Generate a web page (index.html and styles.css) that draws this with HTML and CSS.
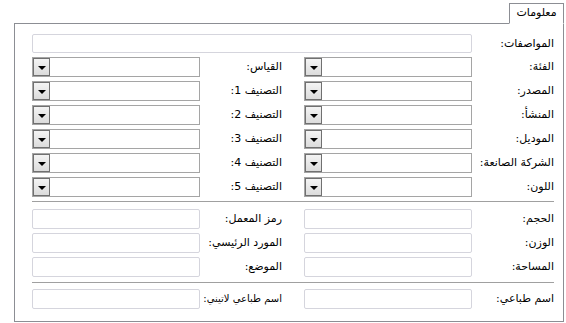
FILE: index.html
```html
<!DOCTYPE html>
<html lang="ar" dir="rtl">
<head>
    <meta charset="UTF-8">
    <meta name="viewport" content="width=device-width, initial-scale=1.0">
    <title>معلومات</title>
    <link rel="stylesheet" href="styles.css">
</head>
<body>
    <div class="wrapper">
        <div class="tabs">
            <div class="tab">معلومات</div>
        </div>
        <div class="panel">
            <div class="grid">
                <label class="lbl">المواصفات:</label>
                <div class="field wide"></div>

                <label class="lbl">الفئة:</label>
                <div class="combo"><span class="combo-btn"></span></div>
                <span></span>
                <label class="lbl">القياس:</label>
                <div class="combo"><span class="combo-btn"></span></div>

                <label class="lbl">المصدر:</label>
                <div class="combo"><span class="combo-btn"></span></div>
                <span></span>
                <label class="lbl">التصنيف 1:</label>
                <div class="combo"><span class="combo-btn"></span></div>

                <label class="lbl">المنشأ:</label>
                <div class="combo"><span class="combo-btn"></span></div>
                <span></span>
                <label class="lbl">التصنيف 2:</label>
                <div class="combo"><span class="combo-btn"></span></div>

                <label class="lbl">الموديل:</label>
                <div class="combo"><span class="combo-btn"></span></div>
                <span></span>
                <label class="lbl">التصنيف 3:</label>
                <div class="combo"><span class="combo-btn"></span></div>

                <label class="lbl">الشركة الصانعة:</label>
                <div class="combo"><span class="combo-btn"></span></div>
                <span></span>
                <label class="lbl">التصنيف 4:</label>
                <div class="combo"><span class="combo-btn"></span></div>

                <label class="lbl">اللون:</label>
                <div class="combo"><span class="combo-btn"></span></div>
                <span></span>
                <label class="lbl">التصنيف 5:</label>
                <div class="combo"><span class="combo-btn"></span></div>
            </div>

            <div class="sep sep-1"></div>

            <div class="grid">
                <label class="lbl">الحجم:</label>
                <div class="field"></div>
                <span></span>
                <label class="lbl">رمز المعمل:</label>
                <div class="field"></div>

                <label class="lbl">الوزن:</label>
                <div class="field"></div>
                <span></span>
                <label class="lbl">المورد الرئيسي:</label>
                <div class="field"></div>

                <label class="lbl">المساحة:</label>
                <div class="field"></div>
                <span></span>
                <label class="lbl">الموضع:</label>
                <div class="field"></div>
            </div>

            <div class="sep sep-2"></div>

            <div class="grid">
                <label class="lbl">اسم طباعي:</label>
                <div class="field"></div>
                <span></span>
                <label class="lbl lbl-tight">اسم طباعي لاتيني:</label>
                <div class="field"></div>
            </div>
        </div>
    </div>
</body>
</html>
```

FILE: styles.css
```css
body {
    font-family: 'DejaVu Sans', sans-serif;
    font-size: 11px;
    color: #000;
    background-color: #fff;
    margin: 0;
    padding: 0;
}

.wrapper {
    width: 550px;
    margin-right: 2px;
    padding-top: 3px;
}

.tabs {
    display: flex;
}

.tab {
    position: relative;
    z-index: 1;
    width: 55px;
    height: 21px;
    box-sizing: border-box;
    border: 1px solid #8c8e94;
    border-bottom-color: #fff;
    background-color: #fff;
    margin-bottom: -1px;
    display: flex;
    align-items: center;
    justify-content: center;
    padding-bottom: 2px;
}

.panel {
    height: 299px;
    box-sizing: border-box;
    border: 1px solid #8c8e94;
    padding: 10px 9px 12px 17px;
}

.grid {
    display: grid;
    grid-template-columns: 82px 168px 22px 82px 168px;
    grid-auto-rows: 20px;
    row-gap: 4px;
}

.grid:first-child {
    grid-template-rows: 19px;
}

.lbl {
    display: flex;
    align-items: center;
    white-space: nowrap;
    padding-bottom: 1px;
}

.lbl-tight {
    font-size: 10px;
    letter-spacing: -0.2px;
    margin-left: -3px;
}

.field {
    box-sizing: border-box;
    border: 1px solid #d5d5dd;
    border-radius: 2px;
    background-color: #fff;
}

.field.wide {
    grid-column: span 4;
}

.combo {
    box-sizing: border-box;
    border: 1px solid #a5a5a5;
    background-color: #fff;
    display: flex;
    justify-content: flex-end;
}

.combo-btn {
    width: 17px;
    box-sizing: border-box;
    border: 1px solid #707070;
    background: linear-gradient(#f4f4f4, #dcdcdc);
    display: flex;
    align-items: center;
    justify-content: center;
    padding-top: 2px;
}

.combo-btn::after {
    content: "";
    border-left: 4px solid transparent;
    border-right: 4px solid transparent;
    border-top: 4px solid #000;
}

.sep {
    height: 1px;
    background-color: #a0a0a0;
}

.sep-1 {
    margin: 4px 0 7px;
}

.sep-2 {
    margin: 5px 0 6px;
}
```
